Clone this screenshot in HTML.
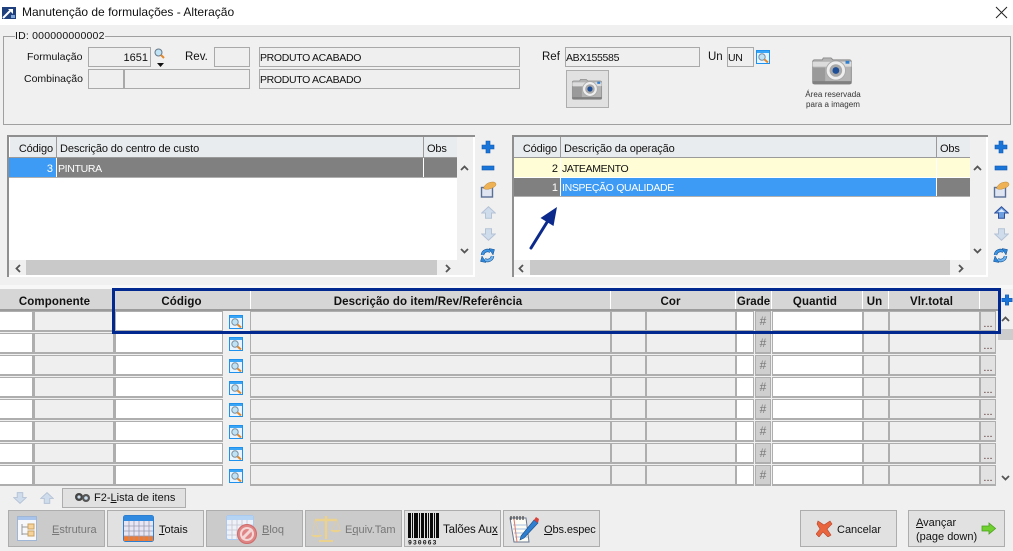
<!DOCTYPE html>
<html lang="pt"><head><meta charset="utf-8"><title>Manutenção de formulações</title>
<style>
html,body{margin:0;padding:0;background:#f0f0f0}
#p{position:relative;width:1013px;height:551px;overflow:hidden;background:#f0f0f0;font:11.5px "Liberation Sans",sans-serif;color:#111}
#p div,#p svg{position:absolute;box-sizing:border-box}
.f{border:1px solid #a9a9a9;background:#efefef;height:20px;line-height:20px;white-space:nowrap;padding-left:0}
.u{font-size:10.5px;letter-spacing:-.33px}
.l{white-space:nowrap;line-height:14px}
.h{background:#e9ecee;line-height:24px;height:20px;white-space:nowrap;top:137px;border-right:1px solid #9a9a9a;font-size:11px;letter-spacing:-.12px}
.s{background:#d6d6d6;top:289px;height:20px;line-height:26px;text-align:center;font-weight:bold;border-right:1px solid #fff;font-size:11.5px;white-space:nowrap;letter-spacing:.1px}
.r{left:0;width:998px;height:22px}
.c{top:0;height:21px;border:2px solid #aeaeae;border-width:1px 1px 2px 1px;background:#efefef}
.a{left:0;width:34px;border-left:0;background:#fff;border-right:2px solid #aeaeae}
.b{left:34px;width:81px;border-right:2px solid #aeaeae}
.d{left:115px;width:108px;background:#fff}
.e{left:250px;width:361px}
.g{left:611px;width:35px}
.i{left:646px;width:90px}
.j{left:736px;width:18px;background:#fff}
.k{left:755px;width:16px;background:#cfcfcf;text-align:center;line-height:19px;color:#777;font-size:12px}
.m{left:772px;width:91px;background:#fff}
.n{left:863px;width:26px}
.o{left:889px;width:91px}
.q{left:980px;width:16px;height:21px;background:#e2e2e2;text-align:center;line-height:24px;font-size:11px;color:#533}
.t{left:229px;top:4px}
.btn{top:510px;height:37px;border:1px solid #adadad;background:#e1e1e1;white-space:nowrap;line-height:38px;font-size:11px}
.dis{background:#cbcbcb;color:#777}
u{text-decoration:underline}
</style></head><body>
<div id="p">
<svg width="0" height="0" style="left:0;top:0"><defs>
<symbol id="lk" viewBox="0 0 14 14"><rect x=".5" y=".5" width="13" height="13" fill="#e8f4ff" stroke="#1e90ee"/><rect x="1" y="1" width="12" height="2" fill="#3aa4f5"/><circle cx="6" cy="7" r="3.2" fill="#bfe3f5" stroke="#7d8f9e"/><path d="M8.5 9.5L12 12.5" stroke="#e58a2a" stroke-width="2"/></symbol>
<symbol id="cam" viewBox="0 0 42 30"><path d="M3 4h8l1-2h8l2 2h17a2 2 0 0 1 2 2v21a2 2 0 0 1-2 2H3a2 2 0 0 1-2-2V6a2 2 0 0 1 2-2z" fill="#b4b4b4" stroke="#8c8c8c"/><rect x="1" y="6" width="40" height="5" fill="#dcdcdc"/><rect x="1" y="12" width="13" height="16" fill="#9a9a9a"/><rect x="1" y="26" width="40" height="3" fill="#808080"/><circle cx="25" cy="15" r="10" fill="#eee" stroke="#aaa"/><circle cx="25" cy="15" r="6.5" fill="#a8a8a8"/><circle cx="25" cy="15" r="3.5" fill="#1f4f96"/><rect x="35" y="5" width="4" height="3" fill="#2f7fd0"/></symbol>
<symbol id="pl" viewBox="0 0 14 14"><path d="M5 1h4v4h4v4H9v4H5V9H1V5h4z" fill="#1a75d8" stroke="#0e57b0" stroke-width=".6"/></symbol>
<symbol id="mi" viewBox="0 0 14 14"><rect x="1" y="5" width="12" height="4" fill="#1a75d8" stroke="#0e57b0" stroke-width=".6"/></symbol>
<symbol id="ed" viewBox="0 0 17 17"><rect x="1.500" y="6.500" width="11" height="9.500" fill="#dfe6f2" stroke="#5a6f96" stroke-width="1.400"/><path d="M3.500 7.500C4.500 3.500 8.500 1 13 1c3.500 0 4 3.500 1 5-2.500 1.500-7 3.500-10.500 1.500z" fill="#eeb153" stroke="#b98638" stroke-width=".5"/></symbol>
<symbol id="up" viewBox="0 0 15 13"><path d="M7.5 .7L14.3 7H10.5v5.3h-6V7H.7z" fill="#cfdcec" stroke="#b4c2d6"/></symbol>
<symbol id="upa" viewBox="0 0 15 13"><path d="M7.5 .7L14.3 7H10.5v5.3h-6V7H.7z" fill="#6d9fe0" stroke="#2f4f9a"/><path d="M7.5 3L4 6h7z" fill="#dfeaff"/></symbol>
<symbol id="dn" viewBox="0 0 15 13"><path d="M4.5 .7h6V6h3.8L7.5 12.3.7 6h3.800z" fill="#cfdcec" stroke="#b4c2d6"/></symbol>
<symbol id="rf" viewBox="0 0 15 15"><path d="M2.500 7A5 5 0 0 1 10.500 3.500" fill="none" stroke="#17508f" stroke-width="3.400"/><path d="M2.500 7A5 5 0 0 1 10.500 3.500" fill="none" stroke="#3d95e4" stroke-width="2.200"/><path d="M9 .5L14.500 1.500 13 7z" fill="#2f86d8" stroke="#17508f" stroke-width=".5"/><path d="M12.500 8A5 5 0 0 1 4.500 11.500" fill="none" stroke="#17508f" stroke-width="3.400"/><path d="M12.500 8A5 5 0 0 1 4.500 11.500" fill="none" stroke="#6ab3f0" stroke-width="2.200"/><path d="M6 14.500L.5 13.500 2 8z" fill="#2f86d8" stroke="#17508f" stroke-width=".5"/></symbol>
<symbol id="ch" viewBox="0 0 9 6"><path d="M1 5l3.500-3.500L8 5" fill="none" stroke="#555" stroke-width="1.800"/></symbol>
<symbol id="cd" viewBox="0 0 9 6"><path d="M1 1l3.500 3.500L8 1" fill="none" stroke="#555" stroke-width="1.800"/></symbol>
<symbol id="cl" viewBox="0 0 6 9"><path d="M5 1L1.500 4.500 5 8" fill="none" stroke="#555" stroke-width="1.800"/></symbol>
<symbol id="cr" viewBox="0 0 6 9"><path d="M1 1l3.500 3.500L1 8" fill="none" stroke="#555" stroke-width="1.800"/></symbol>
</defs></svg>

<!-- title -->
<div style="left:0;top:0;width:1013px;height:25px;background:#fff"></div>
<svg style="left:2px;top:7px" width="14" height="12" viewBox="0 0 14 12"><rect width="14" height="12" fill="#1f3f7d"/><path d="M1 11L8 4" stroke="#fff" stroke-width="2"/><path d="M6 2h5v5z" fill="#fff"/><rect x="9" y="8" width="4" height="3" fill="#7fa8d8"/></svg>
<div class="l" style="left:22px;top:5px;font-size:12px">Manutenção de formulações - Alteração</div>
<svg style="left:995px;top:6px" width="13" height="13" viewBox="0 0 13 13"><path d="M1 1l11 11M12 1L1 12" stroke="#222" stroke-width="1"/></svg>

<!-- group -->
<div style="left:3px;top:36px;width:1008px;height:89px;border:1px solid #a0a0a0"></div>
<div class="l" style="left:15px;top:29px;background:#f0f0f0;font-size:10.5px;letter-spacing:.2px">ID: 000000000002</div>
<div class="l" style="left:27px;top:50px;font-size:10.5px">Formulação</div>
<div class="f" style="left:88px;top:47px;width:63px;text-align:right;padding-right:2px;font-size:11px">1651</div>
<svg style="left:154px;top:48px" width="11" height="11" viewBox="0 0 11 11"><circle cx="4.500" cy="4.500" r="3.500" fill="#bfe3f5" stroke="#66788a"/><path d="M7 7l3 3" stroke="#e58a2a" stroke-width="2"/></svg>
<svg style="left:157px;top:63px" width="7" height="4" viewBox="0 0 7 4"><path d="M0 0h7L3.500 4z" fill="#111"/></svg>
<div class="l" style="left:185px;top:50px">Rev.</div>
<div class="f" style="left:214px;top:47px;width:36px"></div>
<div class="f u" style="left:259px;top:47px;width:261px">PRODUTO ACABADO</div>
<div class="l" style="left:24px;top:72px;font-size:10.5px">Combinação</div>
<div class="f" style="left:88px;top:69px;width:36px"></div>
<div class="f" style="left:124px;top:69px;width:126px"></div>
<div class="f u" style="left:259px;top:69px;width:261px">PRODUTO ACABADO</div>
<div class="l" style="left:542px;top:50px">Ref</div>
<div class="f u" style="left:565px;top:47px;width:135px">ABX155585</div>
<div class="l" style="left:708px;top:50px">Un</div>
<div class="f u" style="left:727px;top:47px;width:27px">UN</div>
<svg style="left:756px;top:50px" width="14" height="14"><use href="#lk"/></svg>
<div style="left:566px;top:70px;width:43px;height:38px;background:#e1e1e1;border:1px solid #adadad"></div>
<svg style="left:571px;top:78px" width="32" height="22"><use href="#cam"/></svg>
<svg style="left:811px;top:56px" width="42" height="29"><use href="#cam"/></svg>
<div class="l" style="left:793px;top:90px;width:80px;text-align:center;font-size:8px;line-height:10px;color:#333;letter-spacing:.05px">Área reservada<br>para a imagem</div>

<!-- left grid -->
<div style="left:7px;top:135px;width:468px;height:142px;background:#fff;border-top:2px solid #8f8f8f;border-left:2px solid #8f8f8f"></div>
<div style="left:457px;top:137px;width:16px;height:138px;background:#f0f0f0"></div>
<div style="left:9px;top:260px;width:464px;height:15px;background:#f0f0f0"></div>
<div style="left:26px;top:260px;width:411px;height:15px;background:#c9c9c9"></div>
<svg style="left:15px;top:264px" width="6" height="9"><use href="#cl"/></svg>
<svg style="left:445px;top:264px" width="6" height="9"><use href="#cr"/></svg>
<svg style="left:460px;top:165px" width="9" height="6"><use href="#ch"/></svg>
<svg style="left:460px;top:248px" width="9" height="6"><use href="#cd"/></svg>
<div class="h" style="left:10px;width:47px;text-align:right;padding-right:3px">Código</div>
<div class="h" style="left:57px;width:367px;padding-left:3px">Descrição do centro de custo</div>
<div class="h" style="left:424px;width:33px;padding-left:3px;border-right:0">Obs</div>
<div style="left:9px;top:157px;width:448px;height:1px;background:#9a9a9a"></div>
<div style="left:9px;top:158px;width:47px;height:19px;background:#3d9bf5;color:#fff;text-align:right;line-height:23px;padding-right:3px;font-size:11px">3</div>
<div class="u" style="left:57px;top:158px;width:366px;height:19px;background:#808080;color:#fff;line-height:23px;padding-left:1px">PINTURA</div>
<div style="left:424px;top:158px;width:33px;height:19px;background:#808080"></div>
<div style="left:9px;top:177px;width:448px;height:1px;background:#b0b0b0"></div>

<!-- toolbar left -->
<svg style="left:481px;top:140px" width="14" height="14"><use href="#pl"/></svg>
<svg style="left:481px;top:161px" width="14" height="14"><use href="#mi"/></svg>
<svg style="left:480px;top:181px" width="17" height="17"><use href="#ed"/></svg>
<svg style="left:481px;top:206px" width="15" height="13"><use href="#up"/></svg>
<svg style="left:481px;top:228px" width="15" height="13"><use href="#dn"/></svg>
<svg style="left:480px;top:248px" width="15" height="15"><use href="#rf"/></svg>

<!-- right grid -->
<div style="left:512px;top:135px;width:476px;height:142px;background:#fff;border-top:2px solid #8f8f8f;border-left:2px solid #8f8f8f"></div>
<div style="left:970px;top:137px;width:16px;height:138px;background:#f0f0f0"></div>
<div style="left:514px;top:260px;width:472px;height:15px;background:#f0f0f0"></div>
<div style="left:530px;top:260px;width:420px;height:15px;background:#c9c9c9"></div>
<svg style="left:518px;top:264px" width="6" height="9"><use href="#cl"/></svg>
<svg style="left:958px;top:264px" width="6" height="9"><use href="#cr"/></svg>
<svg style="left:973px;top:165px" width="9" height="6"><use href="#ch"/></svg>
<svg style="left:973px;top:248px" width="9" height="6"><use href="#cd"/></svg>
<div class="h" style="left:514px;width:47px;text-align:right;padding-right:3px">Código</div>
<div class="h" style="left:561px;width:376px;padding-left:3px">Descrição da operação</div>
<div class="h" style="left:937px;width:33px;padding-left:3px;border-right:0">Obs</div>
<div style="left:514px;top:157px;width:456px;height:1px;background:#9a9a9a"></div>
<div style="left:514px;top:158px;width:46px;height:19px;background:#fffdd6;text-align:right;line-height:23px;padding-right:2px;font-size:11px">2</div>
<div class="u" style="left:561px;top:158px;width:375px;height:19px;background:#fffdd6;line-height:23px;padding-left:1px">JATEAMENTO</div>
<div style="left:937px;top:158px;width:33px;height:19px;background:#fffdd6"></div>
<div style="left:514px;top:178px;width:46px;height:18px;background:#808080;color:#fff;text-align:right;line-height:21px;padding-right:2px;font-size:11px">1</div>
<div class="u" style="left:561px;top:178px;width:375px;height:18px;background:#3d9bf5;color:#fff;line-height:21px;padding-left:1px">INSPEÇÃO QUALIDADE</div>
<div style="left:937px;top:178px;width:33px;height:18px;background:#808080"></div>
<div style="left:514px;top:196px;width:456px;height:1px;background:#b0b0b0"></div>
<svg style="left:525px;top:202px" width="36" height="50" viewBox="0 0 36 50"><path d="M6 46L24 17" stroke="#0c2a8c" stroke-width="3" stroke-linecap="round"/><path d="M32 5L28.500 24 15.500 16z" fill="#0c2a8c"/></svg>

<!-- toolbar right -->
<svg style="left:994px;top:140px" width="14" height="14"><use href="#pl"/></svg>
<svg style="left:994px;top:161px" width="14" height="14"><use href="#mi"/></svg>
<svg style="left:993px;top:181px" width="17" height="17"><use href="#ed"/></svg>
<svg style="left:994px;top:206px" width="15" height="13"><use href="#upa"/></svg>
<svg style="left:994px;top:228px" width="15" height="13"><use href="#dn"/></svg>
<svg style="left:993px;top:248px" width="15" height="15"><use href="#rf"/></svg>

<!-- bottom grid header -->
<div style="left:0;top:285px;width:1013px;height:4px;background:#f7f7f7"></div>
<div class="s" style="left:0;width:115px;padding-right:5px">Componente</div>
<div class="s" style="left:115px;width:136px;padding-right:2px">Código</div>
<div class="s" style="left:251px;width:360px;padding-right:5px">Descrição do item/Rev/Referência</div>
<div class="s" style="left:611px;width:125px;padding-right:5px">Cor</div>
<div class="s" style="left:736px;width:36px;letter-spacing:0">Grade</div>
<div class="s" style="left:772px;width:91px;padding-right:4px">Quantid</div>
<div class="s" style="left:863px;width:26px;padding-right:2px">Un</div>
<div class="s" style="left:889px;width:91px;padding-right:5px">Vlr.total</div>
<div class="s" style="left:980px;width:18px;border-right:0"></div>
<div style="left:0;top:309px;width:998px;height:2px;background:#9b9b9b"></div>
<svg style="left:1001px;top:294px" width="12" height="12"><use href="#pl"/></svg>

<!-- rows -->
<div class="r" style="top:311px"><div class="c a"></div><div class="c b"></div><div class="c d"></div><svg class="t" width="14" height="14"><use href="#lk"/></svg><div class="c e"></div><div class="c g"></div><div class="c i"></div><div class="c j"></div><div class="c k">#</div><div class="c m"></div><div class="c n"></div><div class="c o"></div><div class="c q">...</div></div>
<div class="r" style="top:333px"><div class="c a"></div><div class="c b"></div><div class="c d"></div><svg class="t" width="14" height="14"><use href="#lk"/></svg><div class="c e"></div><div class="c g"></div><div class="c i"></div><div class="c j"></div><div class="c k">#</div><div class="c m"></div><div class="c n"></div><div class="c o"></div><div class="c q">...</div></div>
<div class="r" style="top:355px"><div class="c a"></div><div class="c b"></div><div class="c d"></div><svg class="t" width="14" height="14"><use href="#lk"/></svg><div class="c e"></div><div class="c g"></div><div class="c i"></div><div class="c j"></div><div class="c k">#</div><div class="c m"></div><div class="c n"></div><div class="c o"></div><div class="c q">...</div></div>
<div class="r" style="top:377px"><div class="c a"></div><div class="c b"></div><div class="c d"></div><svg class="t" width="14" height="14"><use href="#lk"/></svg><div class="c e"></div><div class="c g"></div><div class="c i"></div><div class="c j"></div><div class="c k">#</div><div class="c m"></div><div class="c n"></div><div class="c o"></div><div class="c q">...</div></div>
<div class="r" style="top:399px"><div class="c a"></div><div class="c b"></div><div class="c d"></div><svg class="t" width="14" height="14"><use href="#lk"/></svg><div class="c e"></div><div class="c g"></div><div class="c i"></div><div class="c j"></div><div class="c k">#</div><div class="c m"></div><div class="c n"></div><div class="c o"></div><div class="c q">...</div></div>
<div class="r" style="top:421px"><div class="c a"></div><div class="c b"></div><div class="c d"></div><svg class="t" width="14" height="14"><use href="#lk"/></svg><div class="c e"></div><div class="c g"></div><div class="c i"></div><div class="c j"></div><div class="c k">#</div><div class="c m"></div><div class="c n"></div><div class="c o"></div><div class="c q">...</div></div>
<div class="r" style="top:443px"><div class="c a"></div><div class="c b"></div><div class="c d"></div><svg class="t" width="14" height="14"><use href="#lk"/></svg><div class="c e"></div><div class="c g"></div><div class="c i"></div><div class="c j"></div><div class="c k">#</div><div class="c m"></div><div class="c n"></div><div class="c o"></div><div class="c q">...</div></div>
<div class="r" style="top:465px"><div class="c a"></div><div class="c b"></div><div class="c d"></div><svg class="t" width="14" height="14"><use href="#lk"/></svg><div class="c e"></div><div class="c g"></div><div class="c i"></div><div class="c j"></div><div class="c k">#</div><div class="c m"></div><div class="c n"></div><div class="c o"></div><div class="c q">...</div></div>

<!-- scrollbar bottom -->
<div style="left:998px;top:311px;width:15px;height:176px;background:#f0f0f0"></div>
<div style="left:998px;top:329px;width:15px;height:11px;background:#cdcdcd"></div>
<svg style="left:1001px;top:316px" width="9" height="6"><use href="#ch"/></svg>
<svg style="left:1001px;top:475px" width="9" height="6"><use href="#cd"/></svg>

<!-- blue rectangle -->
<div style="left:112px;top:288px;width:889px;height:46px;border:3px solid #00288f"></div>

<!-- lower bar -->
<svg style="left:13px;top:492px" width="14" height="12"><use href="#dn"/></svg>
<svg style="left:40px;top:492px" width="14" height="12"><use href="#up"/></svg>
<div style="left:62px;top:488px;width:124px;height:20px;background:#e1e1e1;border:1px solid #adadad;line-height:19px;padding-left:31px;white-space:nowrap;font-size:11px">F2-<u>L</u>ista de itens</div>
<svg style="left:75px;top:492px" width="16" height="10" viewBox="0 0 16 10"><circle cx="4" cy="5" r="4" fill="#444"/><circle cx="11" cy="6" r="4" fill="#555"/><circle cx="11" cy="6" r="1.800" fill="#cde"/><circle cx="4" cy="5" r="1.600" fill="#cde"/></svg>

<div class="btn dis" style="left:8px;width:97px;padding-left:43px"><u>E</u>strutura</div>
<svg style="left:17px;top:516px" width="20" height="25" viewBox="0 0 20 25"><rect x=".5" y=".5" width="19" height="24" fill="#f5f7fb" stroke="#9fb6d6"/><rect x="1" y="1" width="18" height="3" fill="#a9c4ea"/><path d="M5 8v11M5 11h6M5 18h6" stroke="#999" fill="none"/><rect x="11" y="8" width="6" height="5" fill="#f6d39c" stroke="#c9a060"/><rect x="11" y="15" width="6" height="5" fill="#f6d39c" stroke="#c9a060"/></svg>

<div class="btn" style="left:107px;width:97px;padding-left:51px"><u>T</u>otais</div>
<svg style="left:123px;top:515px" width="31" height="27" viewBox="0 0 31 27"><rect x=".5" y=".5" width="30" height="26" rx="2" fill="#e6e6f5" stroke="#2f7fd0"/><rect x="1" y="1" width="29" height="5" fill="#2f8ae0"/><rect x="1" y="21" width="29" height="5" fill="#f07a30"/><path d="M6 6v20M11 6v20M16 6v20M21 6v20M26 6v20M1 11h29M1 16h29M1 21h29" stroke="#9a9ab0" stroke-width=".8"/></svg>

<div class="btn dis" style="left:206px;width:97px;padding-left:55px"><u>B</u>loq</div>
<svg style="left:226px;top:515px" width="33" height="30" viewBox="0 0 33 30"><rect x=".5" y=".5" width="27" height="24" rx="2" fill="#eef1f8" stroke="#a9c9ef"/><rect x="1" y="1" width="26" height="4" fill="#b5d3f3"/><path d="M6 5v19M11 5v19M16 5v19M21 5v19M1 10h26M1 15h26M1 20h26" stroke="#c4c4d0" stroke-width=".8"/><circle cx="21" cy="19" r="9.500" fill="#e08585" stroke="#cf6a6a"/><circle cx="21" cy="19" r="6" fill="none" stroke="#f3d6d6" stroke-width="2"/><path d="M16 24L26 14" stroke="#f3d6d6" stroke-width="3"/></svg>

<div class="btn dis" style="left:305px;width:97px;padding-left:39px">E<u>q</u>uiv.Tam</div>
<svg style="left:310px;top:515px" width="32" height="28" viewBox="0 0 32 28"><path d="M16 1v23M5 5h22" stroke="#ecd28f" stroke-width="2.500"/><path d="M1 20h11c-1 3-9 3-11 0zM20 15h11c-1 3-9 3-11 0zM9 25h14v2H9z" fill="#ecd28f"/><path d="M5 5L2 20M5 5l5 15M27 5l-5 10M27 5l3 10" stroke="#e5cd96" stroke-width=".6"/></svg>

<div class="btn" style="left:404px;width:97px;padding-left:38px;font-size:11.5px;letter-spacing:-.1px">Talões Au<u>x</u></div>
<svg style="left:408px;top:513px" width="32" height="32" viewBox="0 0 32 32"><path d="M0 0h3v25H0zM4 0h1v25H4zM6 0h4v25H6zM11 0h1v25h-1zM13 0h3v25h-3zM17 0h2v25h-2zM20 0h1v25h-1zM22 0h3v25h-3zM26 0h1v25h-1zM28 0h3v25h-3z" fill="#0a0a0a"/><rect y="26" width="32" height="6" fill="#e1e1e1"/><text x="0" y="31.500" font-family="Liberation Mono, monospace" font-weight="bold" font-size="6.500" letter-spacing="1" fill="#111">930063</text></svg>

<div class="btn" style="left:503px;width:97px;padding-left:40px;letter-spacing:-.1px"><u>O</u>bs.espec</div>
<svg style="left:509px;top:514px" width="30" height="29" viewBox="0 0 30 29"><path d="M1 4h16l3 24H5z" fill="#fdfdf5" stroke="#6a7690"/><path d="M2 2v4M5 2v4M8 2v4M11 2v4M14 2v4" stroke="#444" stroke-width="1.200"/><path d="M4 11h13M4 15h13M5 19h13M6 23h13" stroke="#a8c0df"/><path d="M5 5l3 23" stroke="#e07a70"/><path d="M12 22L25 6l4 3-14 15-4 2z" fill="#2f7fd0" stroke="#1a4f8a" stroke-width=".6"/><path d="M25 6l2-3 3 2-1 4z" fill="#d9423a"/></svg>

<div class="btn" style="left:800px;width:97px;padding-left:36px">Cancelar</div>
<svg style="left:816px;top:520px" width="17" height="17" viewBox="0 0 17 17"><path d="M2 1l6 4 6-4 2 3-5 5 4 6-3 2-5-5-4 5-3-3 4-5-3-5z" fill="#e8653e" stroke="#b8432a" stroke-width=".6"/></svg>

<div class="btn" style="left:908px;width:97px;padding:5px 0 0 7px;line-height:14px"><u>A</u>vançar<br>(page down)</div>
<svg style="left:981px;top:522px" width="15" height="13" viewBox="0 0 15 13"><path d="M8 1l6.500 5.500L8 12V9H1V4h7z" fill="#6fd02f" stroke="#4aa01e" stroke-width=".8"/></svg>
</div>
</body></html>
